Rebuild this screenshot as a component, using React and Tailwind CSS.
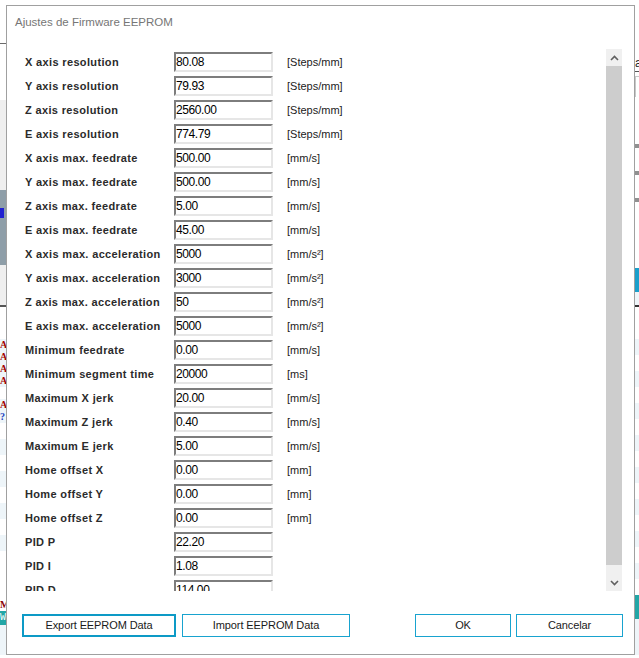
import React from "react";

const rows = [
  ["X axis resolution", "80.08", "[Steps/mm]"],
  ["Y axis resolution", "79.93", "[Steps/mm]"],
  ["Z axis resolution", "2560.00", "[Steps/mm]"],
  ["E axis resolution", "774.79", "[Steps/mm]"],
  ["X axis max. feedrate", "500.00", "[mm/s]"],
  ["Y axis max. feedrate", "500.00", "[mm/s]"],
  ["Z axis max. feedrate", "5.00", "[mm/s]"],
  ["E axis max. feedrate", "45.00", "[mm/s]"],
  ["X axis max. acceleration", "5000", "[mm/s²]"],
  ["Y axis max. acceleration", "3000", "[mm/s²]"],
  ["Z axis max. acceleration", "50", "[mm/s²]"],
  ["E axis max. acceleration", "5000", "[mm/s²]"],
  ["Minimum feedrate", "0.00", "[mm/s]"],
  ["Minimum segment time", "20000", "[ms]"],
  ["Maximum X jerk", "20.00", "[mm/s]"],
  ["Maximum Z jerk", "0.40", "[mm/s]"],
  ["Maximum E jerk", "5.00", "[mm/s]"],
  ["Home offset X", "0.00", "[mm]"],
  ["Home offset Y", "0.00", "[mm]"],
  ["Home offset Z", "0.00", "[mm]"],
  ["PID P", "22.20", ""],
  ["PID I", "1.08", ""],
  ["PID D", "114.00", ""],
];

const Chevron = ({ up }) => (
  <svg width="9" height="6" viewBox="0 0 9 6">
    <polyline
      points={up ? "1,5 4.5,1.5 8,5" : "1,1 4.5,4.5 8,1"}
      fill="none"
      stroke="#606060"
      strokeWidth="1.6"
    />
  </svg>
);

// bits of the window behind the dialog, left edge
const LeftStrip = () => (
  <div className="w-[6px] flex flex-col">
    <div className="h-[38px] bg-white" />
    <div className="h-[1px] bg-[#6b6b6b]" />
    <div className="h-[56px] bg-white" />
    <div className="h-[90px] bg-[#efefef]" />
    <div className="h-[75px] bg-[#8e9ea8] flex flex-col">
      <div className="h-[18px]" />
      <div className="h-[10px] w-[4px] bg-[#2020d0]" />
    </div>
    <div className="h-[40px] bg-[#efefef]" />
    <div className="h-[2px] bg-[#555]" />
    <div className="h-[32px] bg-white" />
    <div className="flex flex-col text-[10px] leading-[12px] text-[#a00000] font-['Liberation_Serif',serif] font-bold bg-[#eef5f9]">
      <span>A</span>
      <span>A</span>
      <span>A</span>
      <span>A</span>
      <span className="bg-white">&nbsp;</span>
      <span>A</span>
      <span className="text-[#2040c0]">?</span>
    </div>
    <div className="h-[176px] flex flex-col">
      <div className="h-[16px] bg-white" />
      <div className="h-[16px] bg-[#eef5f9]" />
      <div className="h-[16px] bg-white" />
      <div className="h-[16px] bg-[#eef5f9]" />
      <div className="h-[16px] bg-white" />
      <div className="h-[16px] bg-[#eef5f9]" />
      <div className="h-[16px] bg-white" />
      <div className="h-[16px] bg-[#eef5f9]" />
      <div className="h-[48px] bg-white" />
    </div>
    <div className="h-[12px] text-[10px] leading-[12px] text-[#8b0000] font-['Liberation_Serif',serif] font-bold">M</div>
    <div className="h-[14px] bg-[#22a6a6] text-[10px] leading-[14px] text-white font-['Liberation_Mono',monospace]">W</div>
    <div className="flex-1 bg-[#eef5f9]" />
  </div>
);

// bits of the window behind the dialog, right edge
const RightStrip = () => (
  <div className="w-[4px] flex flex-col">
    <div className="h-[50px] bg-white" />
    <div className="h-[16px] text-[12px] leading-[16px] text-[#222] font-['Liberation_Sans',sans-serif] overflow-hidden">a</div>
    <div className="h-[1px] bg-[#555]" />
    <div className="h-[4px] bg-white" />
    <div className="h-[21px] border-l border-t border-[#c8c8c8]" />
    <div className="h-[47px] bg-white" />
    <div className="h-[4px] bg-[#909090]" />
    <div className="h-[23px] bg-white" />
    <div className="h-[4px] bg-[#909090]" />
    <div className="h-[23px] bg-white" />
    <div className="h-[4px] bg-[#909090]" />
    <div className="h-[66px] bg-white" />
    <div className="h-[24px] bg-[#1a9fcb]" />
    <div className="h-[13px] bg-[#eef5f9]" />
    <div className="h-[2px] bg-[#333]" />
    <div className="h-[32px] bg-white" />
    <div className="h-[16px] bg-[#eef5f9]" />
    <div className="h-[16px] bg-white" />
    <div className="h-[16px] bg-[#eef5f9]" />
    <div className="h-[16px] bg-white" />
    <div className="h-[16px] bg-[#eef5f9]" />
    <div className="h-[16px] bg-white" />
    <div className="h-[16px] bg-[#eef5f9]" />
    <div className="h-[16px] bg-white" />
    <div className="h-[16px] bg-[#eef5f9]" />
    <div className="h-[16px] bg-white" />
    <div className="h-[16px] bg-[#eef5f9]" />
    <div className="h-[16px] bg-white" />
    <div className="h-[16px] bg-[#eef5f9]" />
    <div className="h-[16px] bg-white" />
    <div className="h-[16px] bg-[#eef5f9]" />
    <div className="h-[16px] bg-white" />
    <div className="h-[24px] bg-[#22a6a6]" />
    <div className="flex-1 bg-[#eef5f9]" />
  </div>
);

const Button = ({ children, width, focused }) => (
  <div
    className={`h-[23px] flex items-center justify-center bg-white text-[11px] tracking-[-0.1px] text-[#1a1a1a] font-['Liberation_Sans',sans-serif] ${
      focused ? "border-2 border-[#0d9ac6]" : "border border-[#18a3cf]"
    } ${width}`}
  >
    {children}
  </div>
);

export default function App() {
  return (
    <div className="w-[639px] h-[658px] bg-white flex flex-col overflow-hidden">
      <div className="h-[5px] bg-white" />
      <div className="flex h-[650px]">
        <LeftStrip />
        <div className="w-[629px] border border-[#a0a0a0] bg-white flex flex-col">
          <div className="pt-[8px] pl-[8px] mb-[19px] h-[24px] text-[11.5px] leading-[16px] text-[#767676] font-['Liberation_Sans',sans-serif]">
            Ajustes de Firmware EEPROM
          </div>
          <div className="ml-[15px] w-[600px] h-[542px] flex">
            <div className="flex-1 overflow-hidden pt-[1px] pl-[3px]">
              {rows.map(([label, value, unit]) => (
                <div key={label} className="h-[24px] flex items-center">
                  <div className="w-[149px] text-[11px] font-bold tracking-[0.35px] text-[#2b2b2b] font-['Liberation_Sans',sans-serif] whitespace-nowrap">
                    {label}
                  </div>
                  <div className="w-[99px] h-[20px] border-2 border-t-[#7d7d7d] border-l-[#7d7d7d] border-b-[#e6e6e6] border-r-[#e6e6e6] bg-white flex items-center text-[12px] tracking-[-0.4px] text-black font-['Liberation_Sans',sans-serif]">
                    {value}
                  </div>
                  <div className="ml-[14px] text-[11px] text-[#222] font-['Liberation_Sans',sans-serif]">
                    {unit}
                  </div>
                </div>
              ))}
            </div>
            <div className="w-[16px] flex flex-col bg-[#f0f0f0]">
              <div className="h-[17px] flex items-center justify-center">
                <Chevron up />
              </div>
              <div className="h-[499px] bg-[#cdcdcd]" />
              <div className="flex-1" />
              <div className="h-[17px] flex items-center justify-center">
                <Chevron />
              </div>
            </div>
          </div>
          <div className="mt-[23px] ml-[15px] flex">
            <Button width="w-[154px]" focused>
              Export EEPROM Data
            </Button>
            <div className="ml-[6px]">
              <Button width="w-[168px]">Import EEPROM Data</Button>
            </div>
            <div className="ml-[65px]">
              <Button width="w-[96px]">OK</Button>
            </div>
            <div className="ml-[5px]">
              <Button width="w-[107px]">Cancelar</Button>
            </div>
          </div>
        </div>
        <RightStrip />
      </div>
      <div className="h-[3px] bg-white" />
    </div>
  );
}
